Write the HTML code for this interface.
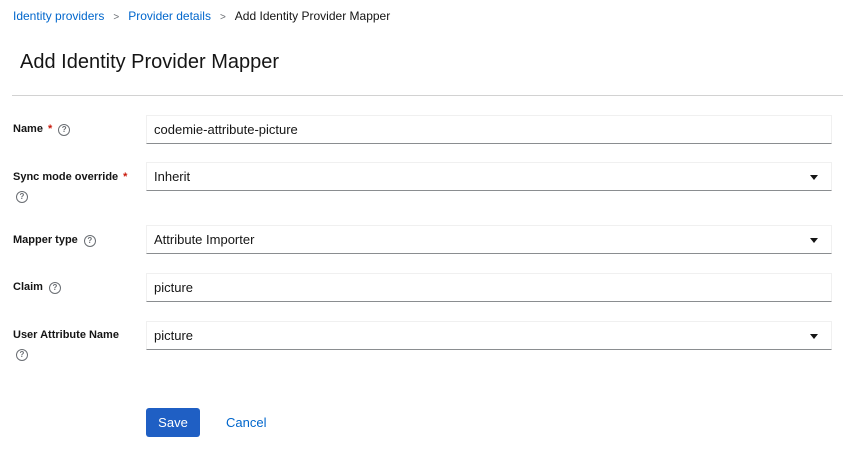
<!DOCTYPE html>
<html><head><style>
body{margin:0;width:843px;height:449px;background:#fff;font-family:"Liberation Sans",sans-serif;color:#151515;position:relative;overflow:hidden}
.a{position:absolute}
.bc{top:9px;font-size:12px}
.bc a{color:#0066cc;text-decoration:none}
.sep{color:#6a6e73;margin:0 9px;font-size:10px}
h1{position:absolute;left:20px;top:51px;margin:0;font-size:20px;font-weight:normal}
.hr{left:12px;top:95px;width:831px;height:1px;background:#d2d2d2}
.lbl{left:13px;font-size:11px;font-weight:bold}
.req{color:#c9190b;margin-left:5px}
.q{display:inline-block;width:10px;height:10px;border:1px solid #6a6e73;border-radius:50%;font-size:8px;line-height:10px;text-align:center;color:#6a6e73;font-weight:bold;margin-left:6px;vertical-align:0px}
.in{left:146px;height:27px;border:1px solid #f0f0f0;border-bottom-color:#8a8d90;font-size:13px;line-height:27px;padding-left:7px;box-sizing:content-box;width:677px}
.car{position:absolute;right:13px;top:12px;width:0;height:0;border-left:4px solid transparent;border-right:4px solid transparent;border-top:5px solid #151515}
.btn{left:146px;top:408px;width:54px;height:29px;background:#1f5fc4;border-radius:3px;color:#fff;font-size:13px;text-align:center;line-height:29px}
.cancel{left:226px;top:415px;color:#0066cc;font-size:13px}
</style></head><body>
<div class="a bc" style="left:13px"><a>Identity providers</a><span class="sep">&gt;</span><a>Provider details</a><span class="sep">&gt;</span>Add Identity Provider Mapper</div>
<h1>Add Identity Provider Mapper</h1>
<div class="a hr"></div>

<div class="a lbl" style="top:123px">Name<span class="req">*</span><span class="q">?</span></div>
<div class="a in" style="top:115px">codemie-attribute-picture</div>

<div class="a lbl" style="top:171px">Sync mode override<span class="req">*</span></div>
<div class="a lbl" style="top:190px;left:10px"><span class="q">?</span></div>
<div class="a in" style="top:162px">Inherit<span class="car"></span></div>

<div class="a lbl" style="top:234px">Mapper type<span class="q">?</span></div>
<div class="a in" style="top:225px">Attribute Importer<span class="car"></span></div>

<div class="a lbl" style="top:281px">Claim<span class="q">?</span></div>
<div class="a in" style="top:273px">picture</div>

<div class="a lbl" style="top:329px">User Attribute Name</div>
<div class="a lbl" style="top:348px;left:10px"><span class="q">?</span></div>
<div class="a in" style="top:321px">picture<span class="car"></span></div>

<div class="a btn">Save</div>
<div class="a cancel">Cancel</div>
</body></html>
